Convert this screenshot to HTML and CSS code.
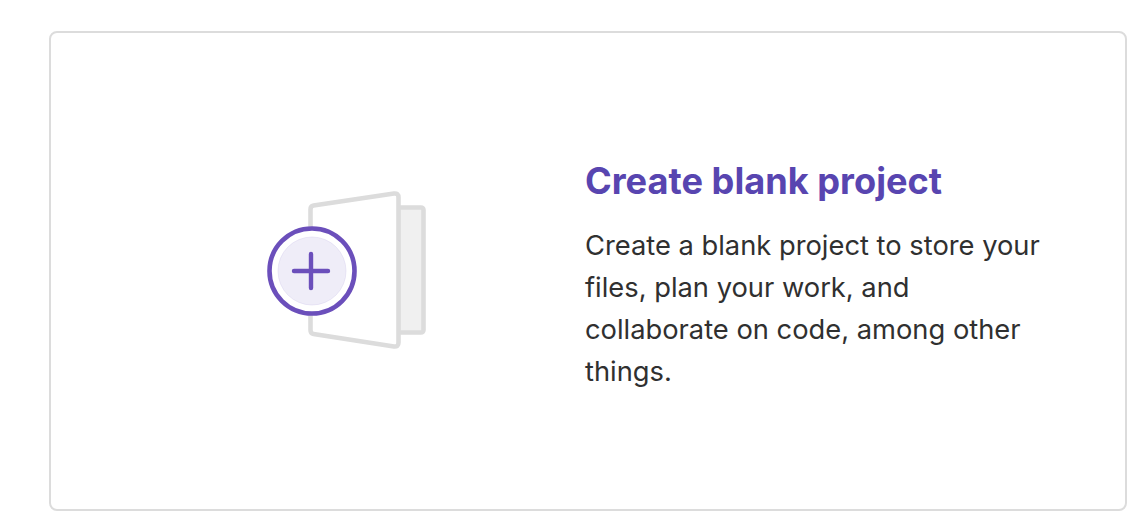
FILE: index.html
```html
<!DOCTYPE html>
<html lang="en">
<head>
  <meta charset="UTF-8" />
  <title>Create blank project</title>
  <link rel="stylesheet" href="styles.css">
</head>
<body>
  <a class="project-card" href="#">
    <div class="card-icon">
      <svg width="170" height="170" viewBox="0 0 170 170" fill="none">
        <rect x="130" y="21.500" width="25.500" height="125" rx="2.500" fill="#f0f0f0" stroke="#dcdcdc" stroke-width="4.600"/>
        <path d="M45.500 19.500 Q42.500 20 42.500 23.500 V144 Q42.500 147.500 45.500 148 L126 160.500 Q130.500 161 130.500 156.500 V11.500 Q130.500 7 126 7.500 Z" fill="#fff" stroke="#dcdcdc" stroke-width="4.600" stroke-linejoin="round"/>
        <circle cx="44" cy="85" r="42.500" fill="#fff" stroke="#6b4fbb" stroke-width="4.600"/>
        <circle cx="44" cy="85" r="34" fill="#efedf8" stroke="#d8d2ee" stroke-width="0.500"/>
        <path d="M43 68 V102 M26 85 H60" stroke="#6b4fbb" stroke-width="4.400" stroke-linecap="round"/>
      </svg>
    </div>
    <div class="card-text">
      <h3>Create blank project</h3>
      <p>Create a blank project to store your files, plan your work, and collaborate on code, among other things.</p>
    </div>
  </a>
</body>
</html>
```

FILE: styles.css
```css
* { margin: 0; padding: 0; box-sizing: border-box; }
body {
  font-family: Inter, "Noto Sans", sans-serif;
  background: #fff;
  padding: 31px 21px 15px 49px;
}

/* Card */
.project-card {
  display: flex;
  align-items: center;
  height: 480px;
  padding-left: 217px;
  border: 2px solid #dcdcdc;
  border-radius: 8px;
  color: #303030;
  text-decoration: none;
}
.card-icon {
  display: flex;
  width: 317px;
  flex-shrink: 0;
}
.card-icon svg {
  overflow: visible;
}
.card-text {
  width: 465px;
  padding-top: 8px;
}
.card-text h3 {
  font-size: 36.200px;
  line-height: 46px;
  font-weight: 650;
  color: #5845b0;
  margin-bottom: 21px;
}
.card-text p {
  font-size: 27.300px;
  line-height: 42px;
}
```
